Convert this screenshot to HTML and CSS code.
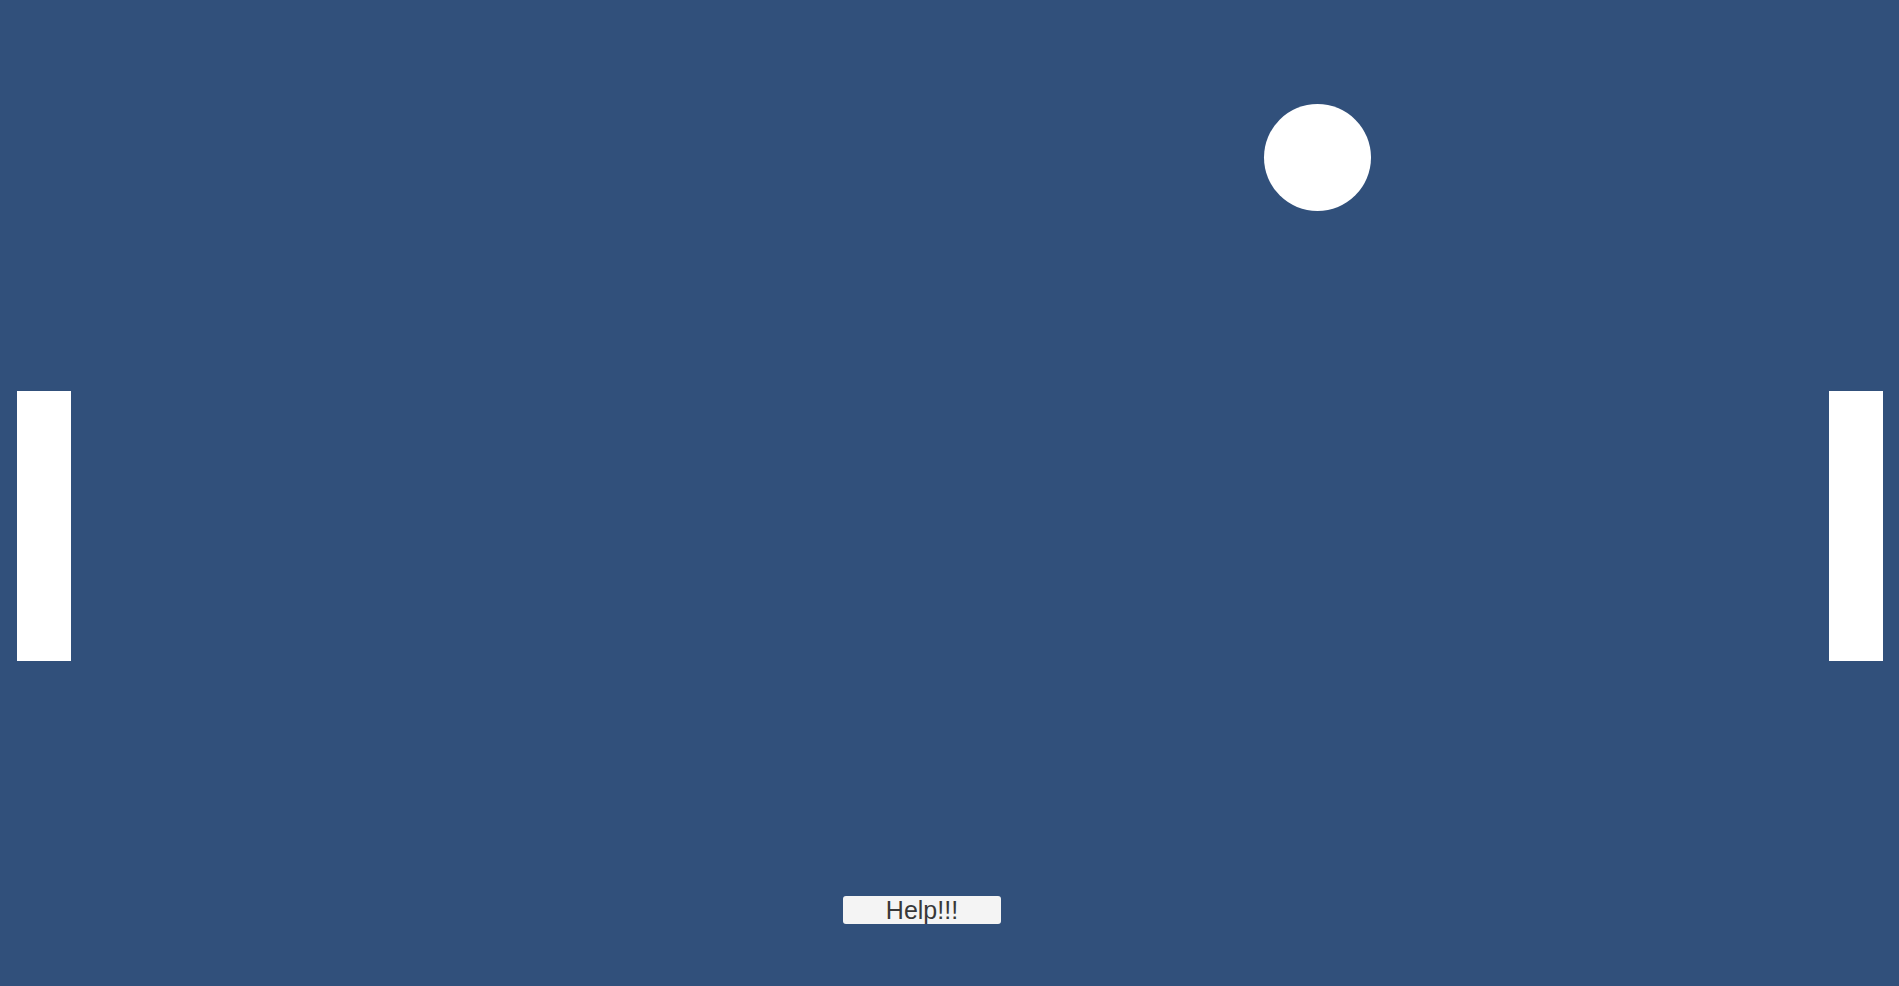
FILE: index.html
```html
<!DOCTYPE html>
<html>
<head>
<meta charset="utf-8">
<title>Pong</title>
<link rel="stylesheet" href="styles.css">
</head>
<body>
<div class="stage">
  <div class="ball"></div>
  <div class="paddle paddle-left"></div>
  <div class="paddle paddle-right"></div>
  <button class="help">Help!!!</button>
</div>
</body>
</html>
```
FILE: styles.css
```css
html, body {
  margin: 0;
  padding: 0;
  width: 100%;
  height: 100%;
  overflow: hidden;
  background: #31507b;
}
.stage {
  position: relative;
  width: 1899px;
  height: 986px;
  background: #31507b;
}
.ball {
  position: absolute;
  left: 1264px;
  top: 104px;
  width: 107px;
  height: 107px;
  border-radius: 50%;
  background: #ffffff;
}
.paddle {
  position: absolute;
  top: 391px;
  width: 54px;
  height: 270px;
  background: #ffffff;
}
.paddle-left { left: 17px; }
.paddle-right { left: 1829px; }
.help {
  position: absolute;
  left: 843px;
  top: 896px;
  width: 158px;
  height: 28px;
  margin: 0;
  padding: 0;
  border: none;
  border-radius: 3px;
  background: #f4f4f4;
  color: #383838;
  font-family: "Liberation Sans", Arial, sans-serif;
  font-size: 25px;
  line-height: 28px;
  text-align: center;
}
```
